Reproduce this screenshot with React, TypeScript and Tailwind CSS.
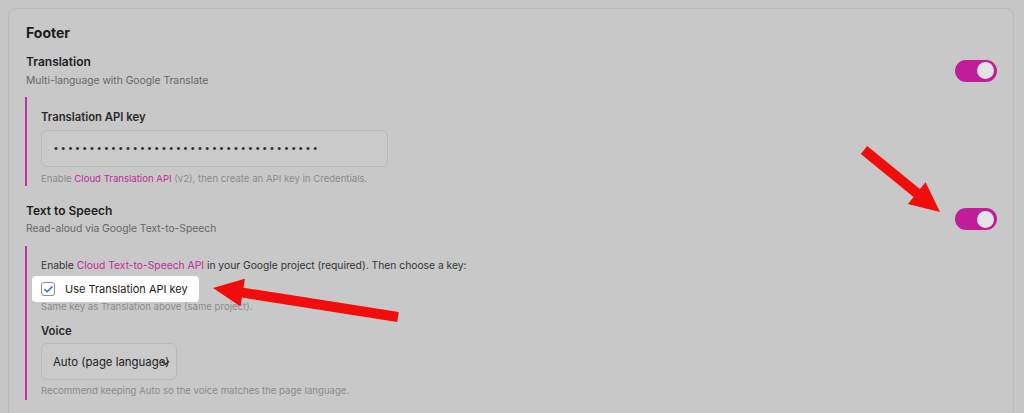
import { Check } from "lucide-react";

const Toggle = () => (
  <div className="w-[42px] h-[22px] rounded-full bg-[#c11d9b] flex items-center justify-end pr-[3px] shrink-0">
    <div className="w-[17px] h-[17px] rounded-full bg-[#e4e4e4]" />
  </div>
);

const Arrows = () => (
  <svg className="absolute inset-0 pointer-events-none" width="1024" height="413" viewBox="0 0 1024 413">
    <polygon
      fill="#f20d0d"
      points="398.8,312.1 243.5,287.7 244.9,278.8 213,288 240.5,306.5 241.9,297.6 397.2,321.9"
    />
    <polygon
      fill="#f20d0d"
      points="867.2,146.1 919.9,189.1 925.6,182.2 940,212 907.9,203.9 913.6,196.9 860.8,153.9"
    />
  </svg>
);

export default function App() {
  const dots = "•".repeat(37);

  return (
    <div
      className="relative h-[413px] w-[1024px] overflow-hidden bg-[#c6c6c6] pt-2 pl-2 pr-[10px]"
      style={{ fontFamily: "Inter, 'Noto Sans', sans-serif" }}
    >
      <div className="rounded-lg border border-[#bababa] bg-[#c8c8c8] pl-[17px] pr-[16px] pt-[14px] h-[440px]">
        <h2 className="text-[14px] leading-5 font-bold text-[#1b1b1b]">Footer</h2>

        {/* Translation */}
        <div className="mt-[10px] flex items-center justify-between">
          <div>
            <div className="text-[12px] leading-[18px] font-semibold text-[#1e1e1e]">Translation</div>
            <div className="mt-[1px] text-[10.3px] leading-4 text-[#676767]">Multi-language with Google Translate</div>
          </div>
          <Toggle />
        </div>

        <div className="mt-[9px] -ml-[1px] border-l-2 border-[#c2339f] pl-[14px] pt-[12px]">
          <div className="text-[11.3px] leading-4 font-semibold text-[#2a2a2a]">Translation API key</div>
          <div className="mt-[5px] w-[347px] h-[37px] rounded-md border border-[#b9b9b9] bg-[#cacaca] flex items-center pl-[12px]">
            <span
              className="text-[11px] tracking-[3.35px] text-[#2b2b2b]"
              style={{ fontFamily: "'Liberation Sans', sans-serif" }}
            >
              {dots}
            </span>
          </div>
          <div className="mt-[5px] text-[9.6px] leading-[14px] text-[#8b8b8b]">
            Enable <span className="text-[#bf2a98]">Cloud Translation API</span> (v2), then create an API key in Credentials.
          </div>
        </div>

        {/* Text to Speech */}
        <div className="mt-[16px] flex items-center justify-between">
          <div>
            <div className="text-[12px] leading-[18px] font-semibold text-[#1e1e1e]">Text to Speech</div>
            <div className="text-[10.3px] leading-4 text-[#676767]">Read-aloud via Google Text-to-Speech</div>
          </div>
          <Toggle />
        </div>

        <div className="mt-[10px] -ml-[1px] border-l-2 border-[#c2339f] pl-[14px] pt-[11px] pb-[2px]">
          <div className="text-[10.3px] leading-4 text-[#333333]">
            Enable <span className="text-[#bf2a98]">Cloud Text-to-Speech API</span> in your Google project (required). Then choose a key:
          </div>
          <div className="relative z-10 mt-[3px] -ml-[9px] w-[167px] h-[26px] rounded bg-white flex items-center pl-[9px] gap-[10px]">
            <div className="w-[14px] h-[14px] rounded-[3px] border border-[#8f8f8f] bg-white flex items-center justify-center">
              <Check className="w-[11px] h-[11px] text-[#2a6ad1]" strokeWidth={3} />
            </div>
            <span className="text-[11px] leading-4 text-[#222222]">Use Translation API key</span>
          </div>
          <div className="-mt-[2px] text-[9.6px] leading-[14px] text-[#8b8b8b]">Same key as Translation above (same project).</div>

          <div className="mt-[9px] text-[11.3px] leading-4 font-semibold text-[#2a2a2a]">Voice</div>
          <div className="relative mt-[4px] w-[136px] h-[37px] rounded-md border border-[#b9b9b9] bg-[#cacaca] flex items-center pl-[11px]">
            <span className="text-[11.4px] leading-4 text-[#222222] whitespace-nowrap">Auto (page language)</span>
            <svg className="absolute left-[119px] top-[16px]" width="9" height="6" viewBox="0 0 9 6">
              <path d="M1 1l3.5 3.5L8 1" fill="none" stroke="#333" strokeWidth="1.4" />
            </svg>
          </div>
          <div className="mt-[4px] text-[9.6px] leading-[14px] text-[#8b8b8b]">
            Recommend keeping Auto so the voice matches the page language.
          </div>
        </div>
      </div>
      <Arrows />
    </div>
  );
}
